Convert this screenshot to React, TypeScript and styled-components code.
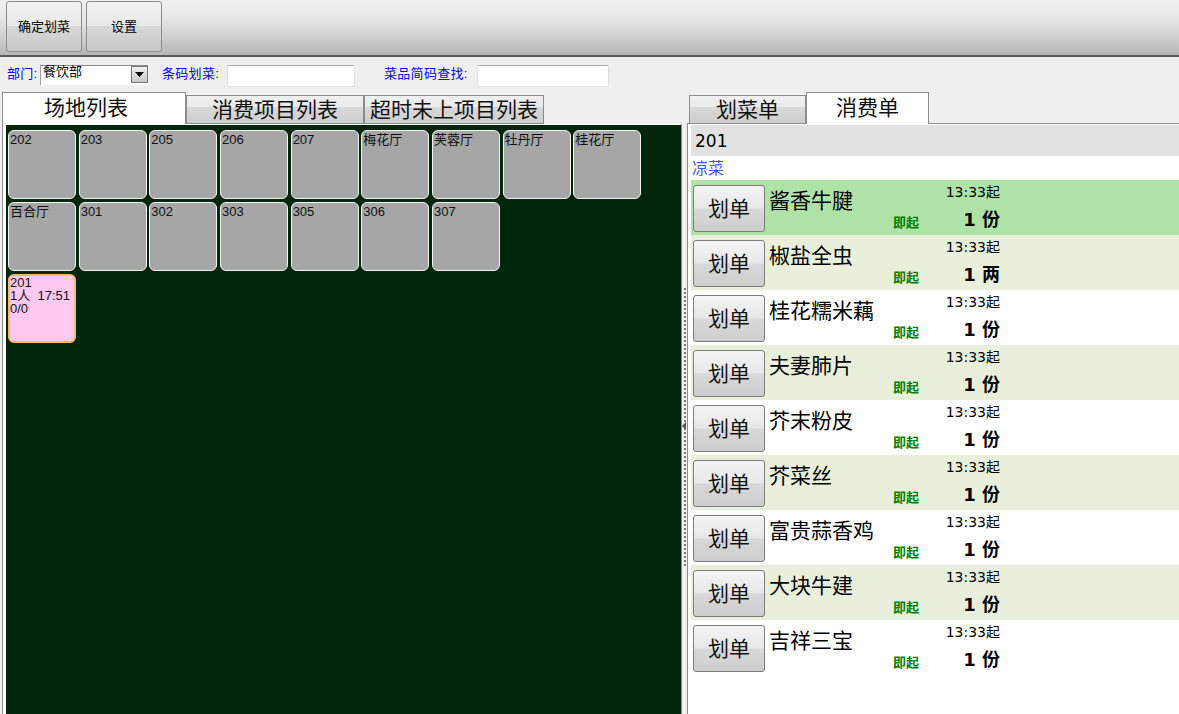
import React from 'react';
import styled, { createGlobalStyle } from 'styled-components';

const CJK = `"Liberation Sans", "Noto Sans CJK SC", sans-serif`;
const NUM = `"DejaVu Sans", "Noto Sans CJK SC", sans-serif`;

const tilesData: string[][] = [
  ['202', '203', '205', '206', '207', '梅花厅', '芙蓉厅', '牡丹厅', '桂花厅'],
  ['百合厅', '301', '302', '303', '305', '306', '307'],
];

const items = [
  { name: '酱香牛腱', unit: '份' },
  { name: '椒盐全虫', unit: '两' },
  { name: '桂花糯米藕', unit: '份' },
  { name: '夫妻肺片', unit: '份' },
  { name: '芥末粉皮', unit: '份' },
  { name: '芥菜丝', unit: '份' },
  { name: '富贵蒜香鸡', unit: '份' },
  { name: '大块牛建', unit: '份' },
  { name: '吉祥三宝', unit: '份' },
];

const App = () => {
  return (
    <Wrapper>
      <GlobalStyle />
      <Toolbar>
        <ToolButton>确定划菜</ToolButton>
        <ToolButton>设置</ToolButton>
      </Toolbar>
      <FilterBar>
        <FilterLabel $width={33}>部门:</FilterLabel>
        <SelectBox>
          <SelectText>餐饮部</SelectText>
          <SelectArrow>
            <svg width="9" height="5" viewBox="0 0 9 5"><path d="M0 0h9L4.5 5z" fill="#000" /></svg>
          </SelectArrow>
        </SelectBox>
        <FilterLabel $width={65} $left={14}>条码划菜:</FilterLabel>
        <TextInput $width={128} />
        <FilterLabel $width={93} $left={29}>菜品简码查找:</FilterLabel>
        <TextInput $width={132} />
      </FilterBar>
      <Main>
        <LeftColumn>
          <TabRow>
            <Tab $active $width={184} $shift={16}>场地列表</Tab>
            <Tab $width={178}>消费项目列表</Tab>
            <Tab $width={180}>超时未上项目列表</Tab>
          </TabRow>
          <LeftPanel>
            <TileBoard>
              {tilesData.map((row, i) => (
                <TileRow key={i}>
                  {row.map((t) => <Tile key={t}>{t}</Tile>)}
                </TileRow>
              ))}
              <TileRow>
                <BusyTile>201{'\n'}1人  17:51{'\n'}0/0</BusyTile>
              </TileRow>
            </TileBoard>
          </LeftPanel>
        </LeftColumn>
        <Splitter>
          <SplitterDots />
          <SplitterArrow />
        </Splitter>
        <RightColumn>
          <RightTabRow>
            <Tab $width={117}>划菜单</Tab>
            <Tab $active $width={123}>消费单</Tab>
          </RightTabRow>
          <RightPanel>
            <TableHeader>201</TableHeader>
            <CategoryLabel>凉菜</CategoryLabel>
            {items.map((item, i) => (
              <ItemRow key={item.name} $selected={i === 0} $striped={i % 2 === 1}>
                <OrderButton>划单</OrderButton>
                <ItemName>{item.name}</ItemName>
                <ItemTag>即起</ItemTag>
                <ItemMeta>
                  <ItemTime>13:33起</ItemTime>
                  <ItemQty>1 {item.unit}</ItemQty>
                </ItemMeta>
              </ItemRow>
            ))}
          </RightPanel>
        </RightColumn>
      </Main>
    </Wrapper>
  );
};

export default App;

const GlobalStyle = createGlobalStyle`
  html, body {
    margin: 0;
    padding: 0;
    overflow: hidden;
  }
  * {
    box-sizing: border-box;
  }
`;

const Wrapper = styled.div`
  width: 1179px;
  height: 714px;
  background: #efefef;
  font-family: ${CJK};
  display: flex;
  flex-direction: column;
  overflow: hidden;
`;

const Toolbar = styled.div`
  height: 57px;
  padding: 1px 0 0 6px;
  display: flex;
  align-items: flex-start;
  gap: 4px;
  background: linear-gradient(#f0f0f0 0%, #e4e4e4 40%, #b6b6b6 100%);
  border-bottom: 2px solid #5a5a5a;
`;

const ToolButton = styled.div`
  width: 76px;
  height: 51px;
  padding-bottom: 2px;
  border: 1px solid #8a8a8a;
  border-radius: 3px;
  background: linear-gradient(#f2f2f2 0%, #e8e8e8 48%, #d8d8d8 50%, #c8c8c8 100%);
  display: flex;
  align-items: center;
  justify-content: center;
  font-size: 13px;
  color: #000;
`;

const FilterBar = styled.div`
  height: 35px;
  padding: 8px 0 0 7px;
  display: flex;
  align-items: flex-start;
`;

const FilterLabel = styled.span<{ $width: number; $left?: number }>`
  width: ${({ $width }) => $width}px;
  margin-left: ${({ $left }) => $left ?? 0}px;
  font-size: 13px;
  line-height: 18px;
  letter-spacing: 0.3px;
  color: #0000ff;
  white-space: nowrap;
`;

const SelectBox = styled.div`
  width: 108px;
  height: 20px;
  background: #fff;
  display: flex;
  align-items: flex-start;
  justify-content: space-between;
  border-top: 1px solid #8c8c8c;
  border-left: 1px solid #a0a0a0;
`;

const SelectText = styled.span`
  font-size: 13px;
  line-height: 11px;
  padding-left: 2px;
  color: #000;
`;

const SelectArrow = styled.div`
  width: 17px;
  height: 17px;
  border: 1px solid #777;
  background: linear-gradient(#f0f0f0, #c8c8c8);
  display: flex;
  align-items: center;
  justify-content: center;
`;

const TextInput = styled.div<{ $width: number }>`
  width: ${({ $width }) => $width}px;
  height: 22px;
  background: #fff;
  border: 1px solid #dcdfe6;
  border-top-color: #a8a8a8;
  border-radius: 2px;
`;

const Main = styled.div`
  flex: 1;
  min-height: 0;
  display: flex;
`;

const LeftColumn = styled.div`
  width: 682px;
  padding-left: 2px;
  display: flex;
  flex-direction: column;
`;

const TabRow = styled.div`
  height: 32px;
  display: flex;
  align-items: flex-end;
`;

const RightTabRow = styled(TabRow)`
  padding-left: 2px;
`;

const Tab = styled.div<{ $active?: boolean; $width: number; $shift?: number }>`
  width: ${({ $width }) => $width}px;
  height: ${({ $active }) => ($active ? 32 : 29)}px;
  border: 1px solid #8c8c8c;
  border-bottom: ${({ $active }) => ($active ? 'none' : '1px solid #8c8c8c')};
  background: ${({ $active }) =>
    $active ? '#fff' : 'linear-gradient(#f0f0f0 0%, #eaeaea 40%, #d8d8d8 42%, #cfcfcf 100%)'};
  padding-bottom: ${({ $active }) => ($active ? 5 : 4)}px;
  padding-right: ${({ $shift }) => $shift ?? 0}px;
  display: flex;
  align-items: center;
  justify-content: center;
  font-size: 21px;
  color: #111;
  white-space: nowrap;
  position: relative;
  z-index: ${({ $active }) => ($active ? 1 : 0)};
`;

const LeftPanel = styled.div`
  flex: 1;
  min-height: 0;
  border-left: 1px solid #8c8c8c;
  border-right: 1px solid #8c8c8c;
  background: #fff;
  padding: 1px 0 0 3px;
  display: flex;
`;

const TileBoard = styled.div`
  flex: 1;
  background: #02260c;
  padding: 5px 0 0 2px;
  display: flex;
  flex-direction: column;
  gap: 3px;
`;

const TileRow = styled.div`
  display: flex;
  gap: 2.67px;
`;

const Tile = styled.div`
  width: 68px;
  height: 69px;
  background: #a6a6a6;
  border: 1px solid #f4f4f4;
  border-radius: 6px;
  padding: 2px 0 0 1px;
  font-size: 13px;
  line-height: 14px;
  color: #111;
`;

const BusyTile = styled(Tile)`
  background: #fec8f0;
  border: 2px solid #f4bd63;
  padding: 0;
  line-height: 13px;
  white-space: pre;
`;

const Splitter = styled.div`
  width: 5px;
  padding: 196px 0 0 2px;
  position: relative;
`;

const SplitterDots = styled.div`
  width: 2px;
  height: 280px;
  background: repeating-linear-gradient(#7c7c7c 0 2px, transparent 2px 4px);
`;

const SplitterArrow = styled.div`
  position: absolute;
  top: 330px;
  left: 0;
  width: 0;
  height: 0;
  border-top: 4px solid transparent;
  border-bottom: 4px solid transparent;
  border-right: 4px solid #555;
`;

const RightColumn = styled.div`
  flex: 1;
  min-width: 0;
  display: flex;
  flex-direction: column;
`;

const RightPanel = styled.div`
  flex: 1;
  min-height: 0;
  border-left: 1px solid #8c8c8c;
  border-top: 1px solid #8c8c8c;
  background: #fff;
  padding: 1px 0 0 3px;
  margin-top: -1px;
`;

const TableHeader = styled.div`
  height: 31px;
  background: #e2e2e2;
  padding-left: 4px;
  font-family: ${NUM};
  font-size: 17px;
  line-height: 32px;
  color: #000;
`;

const CategoryLabel = styled.div`
  height: 24px;
  padding-left: 1px;
  font-size: 16px;
  line-height: 26px;
  color: #4058ff;
`;

const ItemRow = styled.div<{ $selected?: boolean; $striped?: boolean }>`
  height: 55px;
  padding: 5px 0 0 2px;
  display: grid;
  grid-template-columns: 72px 124px 48px 63px;
  background: ${({ $selected, $striped }) =>
    $selected ? '#aee2a6' : $striped ? '#e8f0dc' : '#fff'};
`;

const OrderButton = styled.div`
  width: 72px;
  height: 47px;
  padding-bottom: 3px;
  border: 1px solid #7c7c7c;
  border-radius: 3px;
  background: linear-gradient(#f4f4f4 0%, #e8e8e8 48%, #d8d8d8 52%, #cdcdcd 100%);
  display: flex;
  align-items: center;
  justify-content: center;
  font-size: 21px;
  color: #111;
`;

const ItemName = styled.div`
  padding: 2px 0 0 4px;
  font-size: 21px;
  line-height: 28px;
  color: #000;
  white-space: nowrap;
`;

const ItemTag = styled.div`
  padding: 29px 0 0 4px;
  font-size: 13px;
  line-height: 17px;
  font-weight: bold;
  color: #008000;
  white-space: nowrap;
`;

const ItemMeta = styled.div`
  margin-top: -3px;
  display: flex;
  flex-direction: column;
  align-items: flex-end;
  white-space: nowrap;
`;

const ItemTime = styled.div`
  font-family: ${NUM};
  font-size: 14px;
  line-height: 20px;
  color: #000;
`;

const ItemQty = styled.div`
  margin-top: 6px;
  font-family: ${NUM};
  font-size: 18px;
  line-height: 23px;
  font-weight: bold;
  color: #000;
`;
